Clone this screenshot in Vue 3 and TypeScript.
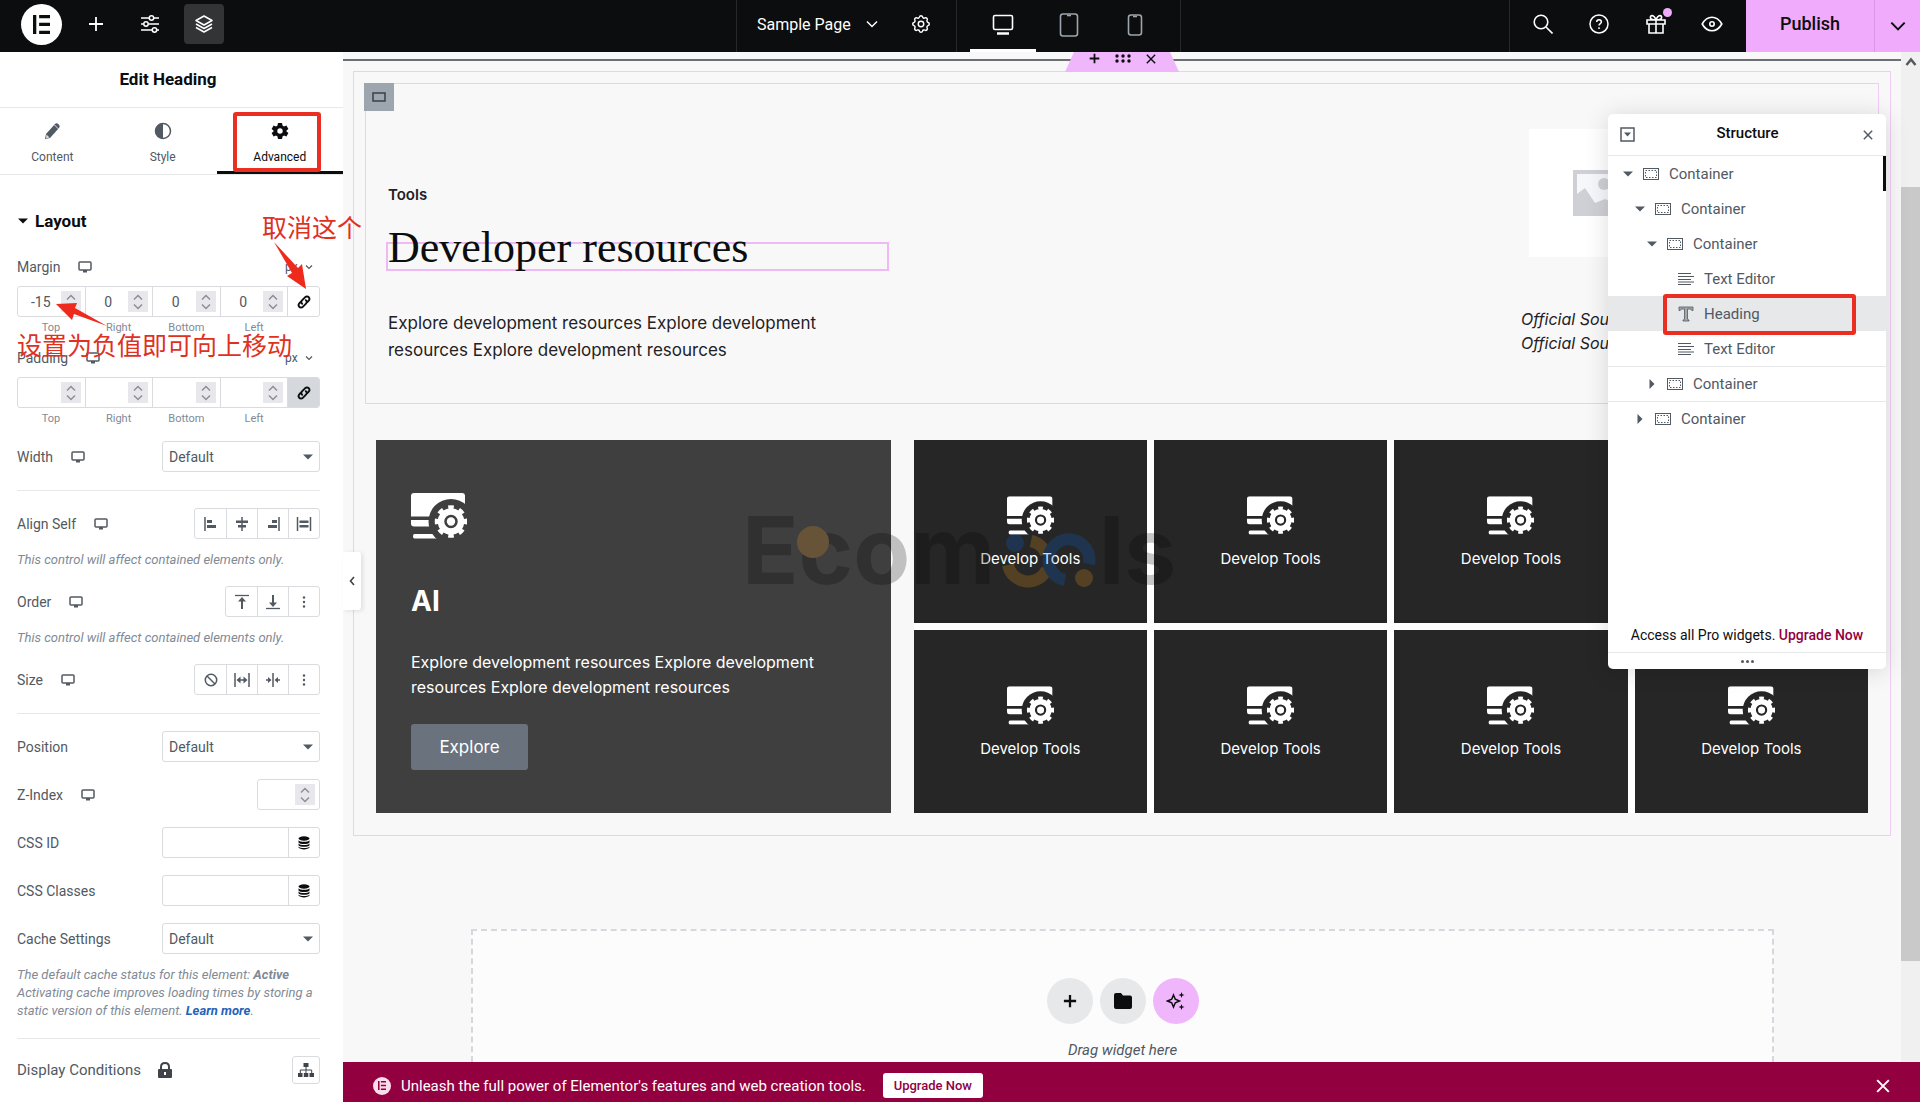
<script setup lang="ts">
import { ref } from 'vue'

interface TreeNode {
  label: string
  level: number
  kind: 'container' | 'text' | 'heading'
  open?: boolean
  ruled?: boolean
}

const sides = ['Top', 'Right', 'Bottom', 'Left']
const margin = ref<string[]>(['-15', '0', '0', '0'])
const padding = ref<string[]>(['', '', '', ''])
const zIndex = ref('')
const cssId = ref('')
const cssClasses = ref('')

const alignIcons = ['a-start', 'a-center', 'a-end', 'a-stretch']
const orderIcons = ['o-start', 'o-end', 'dots-v']
const sizeIcons = ['none', 'grow', 'shrink', 'dots-v']
const tiles = Array.from({ length: 8 }, (_, i) => ({ id: i, label: 'Develop Tools' }))

const tree: TreeNode[] = [
  { label: 'Container', level: 0, kind: 'container', open: true },
  { label: 'Container', level: 1, kind: 'container', open: true },
  { label: 'Container', level: 2, kind: 'container', open: true },
  { label: 'Text Editor', level: 3, kind: 'text' },
  { label: 'Heading', level: 3, kind: 'heading' },
  { label: 'Text Editor', level: 3, kind: 'text' },
  { label: 'Container', level: 2, kind: 'container', open: false, ruled: true },
  { label: 'Container', level: 1, kind: 'container', open: false, ruled: true },
]
</script>

<template>
  <div class="app">
    <svg class="defs" aria-hidden="true">
      <symbol id="monitor" viewBox="0 0 14 12"><path d="M2 1h10q1 0 1 1v6q0 1-1 1H2Q1 9 1 8V2q0-1 1-1z" fill="none" stroke="currentColor" stroke-width="1.5" /><path d="M5 9h4v2.500H5z" fill="currentColor" /></symbol>
      <symbol id="chev" viewBox="0 0 12 12"><path d="M1 3.500l5 5 5-5" fill="none" stroke="currentColor" stroke-width="1.500" /></symbol>
      <symbol id="chev-s" viewBox="0 0 8 8"><path d="M1 2.500l3 3 3-3" fill="none" stroke="currentColor" stroke-width="1.200" /></symbol>
      <symbol id="caret" viewBox="0 0 10 6"><path d="M0 .5h10L5 5.500z" fill="currentColor" /></symbol>
      <symbol id="spin" viewBox="0 0 12 16"><path d="M2 5.500L6 1.500l4 4M2 10.500l4 4 4-4" fill="none" stroke="#8d8f96" stroke-width="1.500" /></symbol>
      <symbol id="link" viewBox="0 0 14 14"><g fill="none" stroke="#0c0d0e" stroke-width="1.900" stroke-linecap="round"><path d="M5.200 8.800C4 7.600 4.200 6.200 5 5.400L8.200 2.200c1-1 2.600-1 3.500 0s.9 2.400 0 3.400L10.400 7" /><path d="M8.800 5.200C10 6.400 9.800 7.800 9 8.600l-3.200 3.200c-1 1-2.600 1-3.500 0s-.9-2.400 0-3.400L3.600 7" /></g></symbol>
      <symbol id="db" viewBox="0 0 12 14"><ellipse cx="6" cy="2.500" rx="5.500" ry="2.200" fill="#0c0d0e" /><path d="M.5 4.200c1.500 2 9.500 2 11 0v2.300c-1.500 2-9.500 2-11 0zM.5 7.500c1.500 2 9.500 2 11 0v1.800c-1.500 2-9.500 2-11 0zM.5 10.400c1.500 2 9.500 2 11 0v1.200c-1.500 2.400-9.500 2.400-11 0z" fill="#0c0d0e" /></symbol>
      <symbol id="a-start" viewBox="0 0 16 16"><path d="M2 1v14" stroke="currentColor" stroke-width="1.500" /><path d="M4 4h5v3H4zM4 9h9v3H4z" fill="currentColor" /></symbol>
      <symbol id="a-center" viewBox="0 0 16 16"><path d="M8 1v14" stroke="currentColor" stroke-width="1.500" /><path d="M2 4.500h12v2.500H2zM4 9h8v2.500H4z" fill="currentColor" /></symbol>
      <symbol id="a-end" viewBox="0 0 16 16"><path d="M14 1v14" stroke="currentColor" stroke-width="1.500" /><path d="M7 4h5v3H7zM3 9h9v3H3z" fill="currentColor" /></symbol>
      <symbol id="a-stretch" viewBox="0 0 16 16"><path d="M1.500 1v14M14.500 1v14" stroke="currentColor" stroke-width="1.500" /><path d="M3.500 4.500h9v2.500h-9zM3.500 9h9v2.500h-9z" fill="currentColor" /></symbol>
      <symbol id="o-start" viewBox="0 0 16 16"><path d="M1 1.500h14" stroke="currentColor" stroke-width="1.300" /><path d="M8 15V6" stroke="currentColor" stroke-width="2" /><path d="M4 7.500L8 3l4 4.500z" fill="currentColor" /></symbol>
      <symbol id="o-end" viewBox="0 0 16 16"><path d="M1 14.500h14" stroke="currentColor" stroke-width="1.300" /><path d="M8 1v9" stroke="currentColor" stroke-width="2" /><path d="M4 8.500L8 13l4-4.500z" fill="currentColor" /></symbol>
      <symbol id="dots-v" viewBox="0 0 16 16"><circle cx="8" cy="3.500" r="1.200" fill="currentColor" /><circle cx="8" cy="8" r="1.200" fill="currentColor" /><circle cx="8" cy="12.500" r="1.200" fill="currentColor" /></symbol>
      <symbol id="none" viewBox="0 0 16 16"><circle cx="8" cy="8" r="5.700" fill="none" stroke="currentColor" stroke-width="1.500" /><path d="M4 4l8 8" stroke="currentColor" stroke-width="1.500" /></symbol>
      <symbol id="grow" viewBox="0 0 16 16"><path d="M1 1v14M15 1v14M5 8h6" stroke="currentColor" stroke-width="1.500" /><path d="M2.500 8l4-3.500v7zM13.500 8l-4-3.500v7z" fill="currentColor" /></symbol>
      <symbol id="shrink" viewBox="0 0 16 16"><path d="M8 1v14M1 8h4M11 8h4" stroke="currentColor" stroke-width="1.500" /><path d="M6.500 8L3 5v6zM9.500 8L13 5v6z" fill="currentColor" /></symbol>
      <symbol id="container" viewBox="0 0 16 12"><rect x=".5" y=".5" width="15" height="11" fill="none" stroke="currentColor" /><rect x="2.500" y="2.500" width="11" height="7" fill="none" stroke="currentColor" stroke-dasharray="1.500 1.500" /></symbol>
      <symbol id="text" viewBox="0 0 16 12"><path d="M0 .5h13M0 3.500h16M0 6.500h13M0 9h16M0 11.500h13" stroke="currentColor" /></symbol>
      <symbol id="heading" viewBox="0 0 16 16"><path d="M1 1h14v3.500h-1.200Q13.500 3 12 3H9.500v10q0 1 1.500 1v1H5v-1q1.500 0 1.500-1V3H4Q2.500 3 2.200 4.500H1z" fill="#a4a9ae" stroke="currentColor" stroke-width=".8" /></symbol>
      <symbol id="dev" viewBox="0 0 56 46">
        <mask id="devcut"><path d="M0 0h56v46H0z" fill="#fff" /><circle cx="40" cy="28.500" r="22.500" fill="#000" /></mask>
        <g mask="url(#devcut)" fill="#fff"><path d="M3 0h48q3 0 3 3v20.500H0V3q0-3 3-3z" /><path d="M0 27h40v6.500H3q-3 0-3-3z" /><path d="M3.500 41H30v4.500H3.500q-1.500 0-1.500-2.200T3.500 41z" /></g>
        <circle cx="40" cy="28.500" r="10" fill="none" stroke="#fff" stroke-width="6.500" />
        <circle cx="40" cy="28.500" r="14" fill="none" stroke="#fff" stroke-width="4.500" pathLength="16" stroke-dasharray="1 1" stroke-dashoffset=".5" />
        <circle cx="40" cy="28.500" r="4.200" fill="#fff" />
      </symbol>
      <symbol id="e" viewBox="0 0 18 20"><path d="M0 0h3.500v20H0zM6.500 0H18v3.500H6.500zM6.500 8.200H18v3.500H6.500zM6.500 16.500H18V20H6.500z" fill="currentColor" /></symbol>
      <symbol id="plus" viewBox="0 0 16 16"><path d="M8 1v14M1 8h14" stroke="currentColor" stroke-width="1.800" /></symbol>
      <symbol id="plus-b" viewBox="0 0 16 16"><path d="M8 1v14M1 8h14" stroke="currentColor" stroke-width="2.600" /></symbol>
      <symbol id="x" viewBox="0 0 12 12"><path d="M1 1l10 10M11 1L1 11" stroke="currentColor" stroke-width="1.700" /></symbol>
    </svg>

    <header class="topbar">
      <div class="tools">
        <button class="logo" aria-label="Elementor"><svg width="17" height="19"><use href="#e" /></svg></button>
        <button class="tool" aria-label="Add"><svg width="16" height="16"><use href="#plus" /></svg></button>
        <button class="tool" aria-label="Site settings">
          <svg width="18" height="18" viewBox="0 0 18 18" fill="none" stroke="currentColor" stroke-width="1.500"><path d="M0 3h8M13 3h5M0 9h2.500M7.500 9H18M0 15h11M16 15h2" /><circle cx="10.500" cy="3" r="2.200" /><circle cx="5" cy="9" r="2.200" /><circle cx="13.500" cy="15" r="2.200" /></svg>
        </button>
        <button class="tool on" aria-label="Structure">
          <svg width="18" height="18" viewBox="0 0 18 18" fill="none" stroke="currentColor" stroke-width="1.500" stroke-linejoin="round"><path d="M9 1l8 4.500L9 10 1 5.500zM1 9l8 4.500L17 9M1 12.500L9 17l8-4.500" /></svg>
        </button>
      </div>
      <div class="page">
        <button class="page-name">Sample Page <svg width="12" height="12"><use href="#chev" /></svg></button>
        <button class="page-gear" aria-label="Page settings">
          <svg width="22" height="22" viewBox="0 0 24 24" fill="none" stroke="currentColor" stroke-width="1.600" stroke-linejoin="round"><path d="M10.300 4.300c.4-1.800 3-1.800 3.400 0a1.700 1.700 0 0 0 2.600 1.100c1.500-.9 3.300.8 2.400 2.400a1.700 1.700 0 0 0 1 2.500c1.800.5 1.800 3 0 3.500a1.700 1.700 0 0 0-1 2.500c.9 1.500-.9 3.300-2.400 2.400a1.700 1.700 0 0 0-2.600 1c-.4 1.800-3 1.800-3.400 0a1.700 1.700 0 0 0-2.600-1c-1.500.9-3.300-.9-2.400-2.400a1.700 1.700 0 0 0-1-2.500c-1.800-.5-1.800-3 0-3.500a1.700 1.700 0 0 0 1-2.500c-.9-1.500.9-3.300 2.400-2.400 1 .6 2.300.1 2.600-1.100z" /><circle cx="12" cy="12" r="3" /></svg>
        </button>
      </div>
      <div class="devices">
        <button class="device current" aria-label="Desktop"><svg width="22" height="22" viewBox="0 0 22 22" fill="none" stroke="currentColor" stroke-width="1.600"><rect x="1.500" y="1.500" width="19" height="14" rx="1.500" /><path d="M5 19.500h12" stroke-width="2.500" /></svg></button>
        <button class="device" aria-label="Tablet"><svg width="20" height="24" viewBox="0 0 20 24" fill="none" stroke="currentColor" stroke-width="1.600"><rect x="1.500" y="1" width="17" height="22" rx="2.500" /><path d="M8 2.500h4" /></svg></button>
        <button class="device" aria-label="Mobile"><svg width="16" height="22" viewBox="0 0 16 22" fill="none" stroke="currentColor" stroke-width="1.600"><rect x="1.500" y="1" width="13" height="20" rx="2.500" /><path d="M6 2.500h4" /></svg></button>
      </div>
      <div class="actions">
        <button aria-label="Search"><svg width="20" height="20" viewBox="0 0 20 20" fill="none" stroke="currentColor" stroke-width="1.600"><circle cx="8" cy="8" r="6.800" /><path d="M13 13l6.500 6.500" /></svg></button>
        <button aria-label="Help"><svg width="20" height="20" viewBox="0 0 20 20" fill="none" stroke="currentColor" stroke-width="1.500"><circle cx="10" cy="10" r="9" /><path d="M7.700 8c0-3 4.700-3 4.700 0 0 1.600-2.400 1.700-2.400 3.600M10 13.200v1.800" /></svg></button>
        <button aria-label="What's new"><svg width="20" height="20" viewBox="0 0 20 20" fill="none" stroke="currentColor" stroke-width="1.600"><path d="M1 6h18v4H1zM3 10v9h14v-9M10 6v13M10 6C8 0 3.500 1 4.500 4q.5 2 5.500 2c2-6 6.500-5 5.500-2q-.5 2-5.500 2" /></svg><i class="dot" /></button>
        <button aria-label="Preview"><svg width="22" height="20" viewBox="0 0 22 20" fill="none" stroke="currentColor" stroke-width="1.600"><path d="M1.200 10Q5 3.200 11 3.200T20.800 10Q17 16.800 11 16.800T1.200 10z" /><circle cx="11" cy="10" r="2.200" /></svg></button>
      </div>
      <div class="publish">
        <button class="pub">Publish</button>
        <button class="more" aria-label="Save options"><svg width="16" height="16"><use href="#chev" /></svg></button>
      </div>
    </header>

    <main class="work">
      <aside class="panel">
        <h1 class="panel-title">Edit Heading</h1>
        <nav class="tabs">
          <button class="tab t1">
            <svg width="16" height="18" viewBox="0 0 16 18"><path d="M1 17l1-5 9-10q1.500-1.500 3.500.3T15 6L6 16z" fill="#515962" /><path d="M2.500 12.500l3 3-3.500.8z" fill="#dfe1e3" /><path d="M10.500 3l4 4" stroke="#fff" stroke-width=".8" /></svg>
            Content
          </button>
          <button class="tab t2">
            <svg width="18" height="18" viewBox="0 0 18 18"><circle cx="9" cy="9" r="7.500" fill="none" stroke="#515962" stroke-width="1.500" /><path d="M9 1.500v15a7.500 7.500 0 0 1 0-15z" fill="#515962" /></svg>
            Style
          </button>
          <button class="tab t3 active">
            <svg width="18" height="18" viewBox="0 0 18 18"><path fill-rule="evenodd" d="M7 1h4l.5 2.500 1.500.9 2.400-.9 2 3.500-1.900 1.600v1L17.400 11l-2 3.500-2.400-.9-1.500.9L11 17H7l-.5-2.500-1.500-.9-2.400.9-2-3.500 1.900-1.400v-1L.6 7l2-3.500 2.400.9 1.500-.9zM9 6.300a2.700 2.700 0 1 0 0 5.400 2.700 2.700 0 0 0 0-5.400z" fill="#0c0d0e" /></svg>
            Advanced
          </button>
        </nav>

        <div class="controls">
          <button class="section"><svg width="10" height="6"><use href="#caret" /></svg>Layout</button>

          <fieldset class="dims first">
            <div class="dims-head">
              <span class="name">Margin</span><svg class="mon" width="14" height="12"><use href="#monitor" /></svg>
              <label class="unit"><select aria-label="Margin unit"><option>px</option></select><svg width="8" height="8"><use href="#chev-s" /></svg></label>
            </div>
            <div class="dims-box">
              <span v-for="(s, i) in sides" :key="s" class="num"><input :id="'m' + s" v-model="margin[i]" type="number" /><button tabindex="-1" :aria-label="'Step ' + s"><svg width="12" height="16"><use href="#spin" /></svg></button></span>
              <button class="linked" aria-label="Link values"><svg width="14" height="14"><use href="#link" /></svg></button>
            </div>
            <div class="dims-names"><label v-for="s in sides" :key="s" :for="'m' + s">{{ s }}</label></div>
          </fieldset>

          <fieldset class="dims">
            <div class="dims-head">
              <span class="name">Padding</span><svg class="mon" width="14" height="12"><use href="#monitor" /></svg>
              <label class="unit"><select aria-label="Padding unit"><option>px</option></select><svg width="8" height="8"><use href="#chev-s" /></svg></label>
            </div>
            <div class="dims-box">
              <span v-for="(s, i) in sides" :key="s" class="num"><input :id="'p' + s" v-model="padding[i]" type="number" /><button tabindex="-1" :aria-label="'Step ' + s"><svg width="12" height="16"><use href="#spin" /></svg></button></span>
              <button class="linked pressed" aria-label="Link values"><svg width="14" height="14"><use href="#link" /></svg></button>
            </div>
            <div class="dims-names"><label v-for="s in sides" :key="s" :for="'p' + s">{{ s }}</label></div>
          </fieldset>

          <div class="row">
            <label class="name" for="width">Width</label><svg class="mon" width="14" height="12"><use href="#monitor" /></svg>
            <span class="select"><select id="width"><option>Default</option></select><svg width="10" height="6"><use href="#caret" /></svg></span>
          </div>
          <hr />
          <div class="row">
            <span class="name">Align Self</span><svg class="mon" width="14" height="12"><use href="#monitor" /></svg>
            <div class="choices"><button v-for="n in alignIcons" :key="n" :aria-label="n"><svg width="16" height="16"><use :href="'#' + n" /></svg></button></div>
          </div>
          <p class="hint">This control will affect contained elements only.</p>
          <div class="row">
            <span class="name">Order</span><svg class="mon" width="14" height="12"><use href="#monitor" /></svg>
            <div class="choices"><button v-for="n in orderIcons" :key="n" :aria-label="n"><svg width="16" height="16"><use :href="'#' + n" /></svg></button></div>
          </div>
          <p class="hint">This control will affect contained elements only.</p>
          <div class="row">
            <span class="name">Size</span><svg class="mon" width="14" height="12"><use href="#monitor" /></svg>
            <div class="choices"><button v-for="n in sizeIcons" :key="n" :aria-label="n"><svg width="16" height="16"><use :href="'#' + n" /></svg></button></div>
          </div>
          <hr />
          <div class="row">
            <label class="name" for="position">Position</label>
            <span class="select"><select id="position"><option>Default</option></select><svg width="10" height="6"><use href="#caret" /></svg></span>
          </div>
          <div class="row">
            <label class="name" for="z">Z-Index</label><svg class="mon" width="14" height="12"><use href="#monitor" /></svg>
            <span class="num single"><input id="z" v-model="zIndex" type="number" /><button tabindex="-1" aria-label="Step Z-Index"><svg width="12" height="16"><use href="#spin" /></svg></button></span>
          </div>
          <div class="row">
            <label class="name" for="cssid">CSS ID</label>
            <span class="dyn"><input id="cssid" v-model="cssId" type="text" /><button aria-label="Dynamic tags"><svg width="12" height="14"><use href="#db" /></svg></button></span>
          </div>
          <div class="row">
            <label class="name" for="cssclass">CSS Classes</label>
            <span class="dyn"><input id="cssclass" v-model="cssClasses" type="text" /><button aria-label="Dynamic tags"><svg width="12" height="14"><use href="#db" /></svg></button></span>
          </div>
          <div class="row">
            <label class="name" for="cache">Cache Settings</label>
            <span class="select"><select id="cache"><option>Default</option></select><svg width="10" height="6"><use href="#caret" /></svg></span>
          </div>
          <p class="hint">The default cache status for this element: <b>Active</b><br />Activating cache improves loading times by storing a static version of this element. <a href="#">Learn more</a>.</p>
          <hr />
          <div class="row conditions">
            <span class="name">Display Conditions</span>
            <svg class="lock" width="14" height="16" viewBox="0 0 14 16"><path d="M3 8V5q0-4 4-4t4 4v3" fill="none" stroke="#3f444b" stroke-width="2" /><path d="M1 7h12q1 0 1 1v7q0 1-1 1H1q-1 0-1-1V8q0-1 1-1z" fill="#3f444b" /><path d="M6 10h2v3H6z" fill="#fff" /></svg>
            <button class="cond" aria-label="Edit conditions"><svg width="16" height="14" viewBox="0 0 16 14" fill="#3f444b"><path d="M5.500 0h5v4h-5zM0 10h4.500v4H0zM5.800 10h4.500v4H5.800zM11.500 10H16v4h-4.500z" /><path d="M8 4v6M2.300 10V7h11.400v3" fill="none" stroke="#3f444b" /></svg></button>
          </div>
        </div>

        <div class="mark tab-mark" />
        <div class="note note-a">取消这个</div>
        <div class="note note-b">设置为负值即可向上移动</div>
        <svg class="arrow arrow-a" width="36" height="48" viewBox="0 0 36 48"><path d="M1 0L25 26l4-4 4 25-19-13 5-3z" fill="#ee2a1c" /></svg>
        <svg class="arrow arrow-b" width="52" height="26" viewBox="0 0 52 26"><path d="M51 24L18 12l-2 6L0 2 21 1l-2 5z" fill="#ee2a1c" /></svg>
        <button class="collapse" aria-label="Hide panel"><svg width="6" height="10" viewBox="0 0 6 10"><path d="M5 1L1.500 5 5 9" fill="none" stroke="#3f444b" stroke-width="1.600" /></svg></button>
      </aside>

      <section class="stage">
        <div class="view">
          <div class="canvas">
            <div class="outer">
              <div class="handle">
                <svg width="11" height="11"><use href="#plus-b" /></svg>
                <svg width="16" height="9" viewBox="0 0 16 9" fill="#0c0d0e"><circle cx="2" cy="2" r="1.700" /><circle cx="8" cy="2" r="1.700" /><circle cx="14" cy="2" r="1.700" /><circle cx="2" cy="7" r="1.700" /><circle cx="8" cy="7" r="1.700" /><circle cx="14" cy="7" r="1.700" /></svg>
                <svg width="10" height="10"><use href="#x" /></svg>
              </div>
              <div class="intro">
                <span class="badge"><svg width="14" height="10" viewBox="0 0 14 10"><rect x="1" y="1" width="12" height="8" fill="none" stroke="#3a3f45" stroke-width="1.500" /></svg></span>
                <div class="copy">
                  <p class="eyebrow">Tools</p>
                  <h2>Developer resources</h2>
                  <p class="lead">Explore development resources Explore development resources Explore development resources</p>
                </div>
                <div class="source">
                  <div class="thumb"><svg width="60" height="46" viewBox="0 0 60 46"><path d="M0 0h60v46H0z" fill="#ced0d6" /><path d="M4 4h52v27l-8-8-9 9-7-3-10 4L12 18l-8 6z" fill="#f6f7fa" /><circle cx="31" cy="14" r="6" fill="#ced0d6" /></svg></div>
                  <p>Official Source<br />Official Source</p>
                </div>
              </div>
              <div class="cards">
                <article class="feature">
                  <svg width="56" height="46"><use href="#dev" /></svg>
                  <h3>AI</h3>
                  <p>Explore development resources Explore development resources Explore development resources</p>
                  <button>Explore</button>
                </article>
                <div class="tiles">
                  <div v-for="t in tiles" :key="t.id" class="tile"><svg width="47" height="39"><use href="#dev" /></svg><span>{{ t.label }}</span></div>
                </div>
              </div>
            </div>
            <div class="drop">
              <div class="drop-buttons">
                <button aria-label="Add container"><svg width="14" height="14"><use href="#plus-b" /></svg></button>
                <button aria-label="Templates"><svg width="18" height="16" viewBox="0 0 18 16"><path d="M2 0h5l2 2.500h7q2 0 2 2V14q0 2-2 2H2q-2 0-2-2V2q0-2 2-2z" fill="#0c0d0e" /></svg></button>
                <button class="ai" aria-label="Build with AI"><svg width="20" height="20" viewBox="0 0 20 20"><path d="M7.500 4l1.800 4.200L13.500 10l-4.200 1.800L7.500 16l-1.800-4.200L1.500 10l4.200-1.800z" fill="none" stroke="#0c0d0e" stroke-width="1.500" /><path d="M15.500 1l.8 2.200 2.200.8-2.200.8-.8 2.200-.8-2.200-2.200-.8 2.200-.8zM15.500 13l.8 2.200 2.200.8-2.200.8-.8 2.200-.8-2.200-2.200-.8 2.200-.8z" fill="#0c0d0e" /></svg></button>
              </div>
              <p>Drag widget here</p>
            </div>
          </div>
          <div class="scroll"><svg width="12" height="12" viewBox="0 0 12 12"><path d="M1.500 9L6 3.500 10.500 9" fill="none" stroke="#555a60" stroke-width="2.500" /></svg><div class="thumb-bar" /></div>
        </div>
        <footer class="notice">
          <span class="mini"><svg width="8" height="9"><use href="#e" /></svg></span>
          <span>Unleash the full power of Elementor's features and web creation tools.</span>
          <button class="upgrade">Upgrade Now</button>
          <button class="dismiss" aria-label="Dismiss"><svg width="14" height="14"><use href="#x" /></svg></button>
        </footer>
      </section>
    </main>

    <svg class="brand" width="430" height="92" viewBox="0 0 430 92">
      <g opacity=".22">
        <text x="-3" y="79" font-size="93">Ecom</text>
        <text x="354" y="79" font-size="93">ls</text>
        <circle cx="68" cy="37" r="16" fill="#f5a020" />
        <path d="M263 60a20.500 20.500 0 0 0 39 4M286 36a20 20 0 0 1 15 13" fill="none" stroke="#f5a020" stroke-width="12" />
        <circle cx="270" cy="38" r="9" fill="#0a68e0" />
        <path d="M320 75a20.500 20.500 0 1 1 24-16" fill="none" stroke="#0a68e0" stroke-width="12" />
        <circle cx="339" cy="73" r="9" fill="#f5a020" />
      </g>
    </svg>

    <aside class="structure">
      <header>
        <button aria-label="Expand all"><svg width="15" height="15" viewBox="0 0 15 15"><rect x="1" y="1" width="13" height="13" fill="none" stroke="#515962" stroke-width="1.500" /><path d="M4 5.500h7L7.500 9.500z" fill="#515962" /></svg></button>
        <h2>Structure</h2>
        <button aria-label="Close"><svg width="10" height="10"><use href="#x" /></svg></button>
      </header>
      <ul>
        <li v-for="(n, i) in tree" :key="i" :class="['l' + n.level, { selected: n.kind === 'heading', ruled: n.ruled }]">
          <span class="tw"><svg v-if="n.kind === 'container'" width="10" height="6" :class="{ shut: !n.open }"><use href="#caret" /></svg></span>
          <svg class="ic" width="16" :height="n.kind === 'heading' ? 16 : 12"><use :href="'#' + n.kind" /></svg>
          <span>{{ n.label }}</span>
          <div v-if="n.kind === 'heading'" class="mark row-mark" />
        </li>
      </ul>
      <p class="pro">Access all Pro widgets. <a href="#">Upgrade Now</a></p>
      <div class="grip"><i /><i /><i /></div>
    </aside>
  </div>
</template>

<style>
body { background: #f8f8f8; }
</style>

<style scoped>
.app { position: relative; min-height: 100vh; display: flex; flex-direction: column; font-family: Roboto, "Noto Sans CJK SC", sans-serif; color: #515962; overflow: hidden; }
.app *, .app *::before { box-sizing: border-box; }
.defs { position: absolute; width: 0; height: 0; }
button { font: inherit; color: inherit; background: none; border: 0; padding: 0; display: flex; align-items: center; justify-content: center; }
h1, h2, h3, p, ul, fieldset { margin: 0; padding: 0; border: 0; min-width: 0; }
svg { display: block; flex: none; }
a { text-decoration: none; }

.topbar { height: 52px; display: flex; background: #0c0d0e; color: #fff; }
.tools { flex: 736; display: flex; align-items: center; padding: 0 0 4px 21px; }
.logo { width: 41px; height: 41px; border-radius: 50%; background: #fff; color: #0c0d0e; margin-right: 14px; }
.tool { width: 40px; height: 40px; border-radius: 4px; margin-right: 14px; }
.tool.on { background: #333436; }
.page { width: 220px; display: flex; align-items: center; justify-content: space-between; padding: 0 24px 4px 20px; border-left: 1px solid #26282b; font-size: 16px; }
.page-name { gap: 15px; }
.devices { width: 225px; display: flex; border: solid #26282b; border-width: 0 1px; padding-left: 13px; margin-right: 328px; }
.device { width: 66px; padding-bottom: 3px; color: #9da5ae; }
.device.current { color: #fff; border-bottom: 3px solid #fff; padding-bottom: 0; }
.actions { width: 237px; display: flex; align-items: center; border-left: 1px solid #26282b; padding: 0 6px 4px 5px; }
.actions button { flex: 1; height: 40px; position: relative; }
.dot { position: absolute; right: 12px; top: 4px; width: 9px; height: 9px; border-radius: 50%; background: #f0abfc; }
.publish { display: flex; width: 174px; background: #f0abfc; color: #0c0d0e; font-size: 18px; font-weight: 500; }
.pub { flex: 1; padding-bottom: 6px; }
.more { width: 46px; border-left: 1px solid #dd97ea; }

.work { flex: 1; display: flex; }
.panel { position: relative; width: 343px; flex: none; background: #fff; z-index: 1; }
.panel-title { height: 55px; line-height: 55px; padding-right: 7px; text-align: center; font-size: 17px; font-weight: 700; color: #0c0d0e; }
.tabs { height: 68px; display: flex; border: solid #e6e8ea; border-width: 1px 0; }
.tab { flex-direction: column; gap: 9px; font-size: 12px; line-height: 16px; padding-top: 4px; }
.t1 { flex: 106; }
.t2 { flex: 109; padding-left: 4px; }
.t3 { flex: 128; }
.tab.active { color: #0c0d0e; border-bottom: 3px solid #0c0d0e; padding-top: 7px; }
.controls { padding: 35px 23px 12px 17px; font-size: 14px; }
.section { width: 100%; justify-content: flex-start; gap: 7px; height: 22px; padding-left: 1px; font-size: 17px; font-weight: 700; color: #0c0d0e; }
.dims { margin-top: 11px; }
.dims.first { margin-top: 24px; }
.dims-head { display: flex; align-items: center; height: 22px; }
.mon { margin-left: 18px; }
.unit { margin-left: auto; display: flex; align-items: center; gap: 4px; padding-right: 7px; }
.unit select { appearance: none; border: 0; background: none; padding: 0; width: 16px; font: 12px Roboto, sans-serif; color: #515962; }
.dims-box { display: flex; height: 31px; margin-top: 8px; border: 1px solid #d9dbde; border-radius: 3px; overflow: hidden; }
.num { flex: 1; display: flex; align-items: center; padding-right: 4px; border-right: 1px solid #d9dbde; min-width: 0; }
.num input { flex: 1; width: 0; min-width: 0; height: 100%; border: 0; padding: 0 0 0 3px; background: none; text-align: center; font: 14px Roboto, sans-serif; color: #515962; appearance: textfield; outline: 0; }
.num input::-webkit-inner-spin-button { appearance: none; display: none; }
.num button { width: 20px; height: 21px; background: #e7e7ec; flex: none; }
.linked { width: 31px; flex: none; }
.linked.pressed { background: #d5d8dc; }
.dims-names { display: flex; margin: 3px 32px 0 0; height: 16px; font-size: 11px; line-height: 16px; color: #818a96; }
.dims-names label { flex: 1; text-align: center; }
.row { display: flex; align-items: center; height: 31px; margin-top: 17px; }
.dims + .row { margin-top: 14px; }
hr { border: 0; height: 1px; background: #e6e8ea; margin: 18px 0 0; }
.hint { margin-top: 12px; font-size: 13px; line-height: 18px; font-style: italic; color: #818a96; }
.hint a { color: #2563b8; font-weight: 700; }
.conditions { margin-top: 15px; font-size: 15px; }
.select { position: relative; margin-left: auto; width: 158px; height: 31px; }
.select select { appearance: none; width: 100%; height: 100%; border: 1px solid #d9dbde; border-radius: 3px; background: #fff; padding: 0 6px; font: 14px Roboto, sans-serif; color: #515962; }
.select svg { position: absolute; right: 7px; top: 13px; pointer-events: none; }
.choices { margin-left: auto; display: flex; height: 31px; border: 1px solid #d9dbde; border-radius: 3px; }
.choices button { width: 31px; }
.choices button + button { border-left: 1px solid #d9dbde; }
.single { flex: none; margin-left: auto; width: 63px; height: 31px; border: 1px solid #d9dbde; border-radius: 3px; }
.dyn { margin-left: auto; display: flex; width: 158px; height: 31px; border: 1px solid #d9dbde; border-radius: 3px; }
.dyn input { flex: 1; min-width: 0; border: 0; background: none; padding: 0 6px; outline: 0; }
.dyn button { width: 31px; border-left: 1px solid #d9dbde; }
.lock { margin-left: 17px; }
.cond { margin-left: auto; width: 28px; height: 28px; border: 1px solid #d9dbde; border-radius: 3px; }
.collapse { position: absolute; left: 343px; top: 500px; width: 18px; height: 58px; background: #fff; border-radius: 0 3px 3px 0; box-shadow: 2px 1px 4px rgba(0, 0, 0, .1); }
.mark { position: absolute; border: 4px solid #ea2e22; border-radius: 3px; }
.tab-mark { left: 233px; top: 60px; width: 88px; height: 60px; }
.note { position: absolute; font-family: "Noto Sans CJK SC", sans-serif; font-size: 25px; line-height: 36px; color: #e0301e; white-space: nowrap; }
.note-a { left: 262px; top: 156px; }
.note-b { left: 17px; top: 274px; }
.arrow { position: absolute; }
.arrow-a { left: 273px; top: 190px; }
.arrow-b { left: 56px; top: 250px; }

.stage { flex: 1; min-width: 0; display: flex; flex-direction: column; }
.view { flex: 1; display: flex; }
.canvas { flex: 1; min-width: 0; display: flex; flex-direction: column; background: #f8f8f8; padding: 19px 10px 0; position: relative; }
.canvas::before { content: ""; position: absolute; left: 0; right: 0; top: 7px; height: 2px; background: #6d6f73; }
.outer { position: relative; border: 1px solid #efcdf4; padding: 11px; font-family: Inter, sans-serif; }
.handle { position: absolute; left: 50%; top: -20px; margin-left: -57px; width: 114px; height: 20px; padding-bottom: 7px; background: #f0b6fb; clip-path: polygon(9px 0, 105px 0, 100% 100%, 0 100%); display: flex; align-items: center; justify-content: center; gap: 15px; color: #0c0d0e; }
.intro { position: relative; display: flex; justify-content: space-between; border: 1px solid #efcdf4; height: 321px; padding: 0 22px; }
.badge { position: absolute; left: -2px; top: -1px; width: 30px; height: 28px; background: #9da5ae; display: flex; align-items: center; justify-content: center; }
.copy { width: 500px; padding-top: 99px; color: #1f2124; }
.eyebrow { font-size: 15px; line-height: 24px; font-weight: 600; }
.copy h2 { margin: 35px 0 0 -2px; width: 503px; height: 29px; border: 2px solid #efb9f6; font-family: "Liberation Serif", serif; font-size: 44px; font-weight: 400; line-height: 8px; color: #0c0d0e; }
.lead { margin-top: 39px; font-size: 17px; line-height: 27px; }
.source { width: 313px; padding-top: 45px; }
.thumb { width: 214px; height: 128px; margin-left: -14px; background: #fff; display: flex; align-items: center; padding-left: 44px; }
.source p { margin: 50px 0 0 -22px; font-size: 16px; line-height: 24px; font-style: italic; color: #1f2124; }
.cards { display: grid; grid-template-columns: 515fr 955fr; gap: 23px; padding: 36px 11px 11px; }
.feature { min-width: 0; background: #3f3f3f; color: #fff; padding: 53px 35px 43px; }
.feature h3 { margin-top: 45px; font-size: 28px; line-height: 34px; font-weight: 700; }
.feature p { margin-top: 32px; font-size: 16px; line-height: 25px; }
.feature button { margin-top: 24px; width: 117px; height: 46px; border-radius: 3px; background: #69727d; font-size: 17px; }
.tiles { display: grid; grid-template-columns: repeat(4, 1fr); gap: 7px; background: #fff; }
.tile { background: #262626; color: #fff; display: flex; flex-direction: column; align-items: center; justify-content: center; gap: 12px; padding-top: 4px; font-size: 15px; line-height: 24px; }
.drop { flex: 1; margin: 93px 117px 0 118px; border: 2px dashed #d5d8dc; border-bottom: 0; background: #fcfcfc; padding: 47px 0 0; min-height: 132px; }
.drop-buttons { display: flex; justify-content: center; gap: 7px; }
.drop-buttons button { width: 46px; height: 46px; border-radius: 50%; background: #e6e8ea; color: #0c0d0e; }
.drop-buttons .ai { background: #f0b6fb; }
.drop p { margin-top: 17px; text-align: center; font-size: 15px; line-height: 18px; font-style: italic; }
.scroll { width: 19px; background: #f0f0f0; display: flex; flex-direction: column; align-items: center; padding-top: 4px; }
.thumb-bar { width: 19px; flex: 1; margin: 119px 0 101px; background: #c9c9c9; }
.notice { height: 40px; display: flex; align-items: center; background: #93003f; color: #fff; font-size: 15px; padding: 7px 30px 0 30px; }
.mini { width: 18px; height: 18px; border-radius: 50%; background: #fbdcec; color: #93003f; display: flex; align-items: center; justify-content: center; margin-right: 10px; }
.upgrade { margin-left: 17px; width: 100px; height: 25px; border-radius: 3px; background: #fff; color: #93003f; font-size: 13px; font-weight: 500; }
.dismiss { margin-left: auto; }

.brand { position: absolute; left: 50%; top: 505px; margin-left: -215px; font-family: Inter, sans-serif; font-weight: 700; pointer-events: none; z-index: 2; }

.structure { position: absolute; right: 34px; top: 114px; width: 278px; height: 555px; background: #fff; border-radius: 5px; box-shadow: 0 2px 24px rgba(0, 0, 0, .14); display: flex; flex-direction: column; font-size: 15px; z-index: 3; }
.structure header { display: flex; align-items: center; height: 42px; padding: 0 13px 0 12px; border-bottom: 1px solid #e6e8ea; }
.structure h2 { flex: 1; text-align: center; font-size: 15px; font-weight: 500; padding: 0 3px 3px 0; color: #0c0d0e; }
.structure ul { flex: 1; list-style: none; position: relative; }
.structure ul::before { content: ""; position: absolute; right: 0; top: 0; width: 3px; height: 35px; background: #0c0d0e; }
.structure li { position: relative; display: flex; align-items: center; height: 35px; }
.structure li.ruled { border-top: 1px solid #e6e8ea; }
.structure li.selected { background: #e6e8ea; }
.l0 { padding-left: 15px; }
.l1 { padding-left: 27px; }
.l2 { padding-left: 39px; }
.l3 { padding-left: 50px; }
.tw { width: 10px; margin-right: 10px; }
.shut { transform: rotate(-90deg); }
.ic { margin-right: 10px; }
.row-mark { left: 55px; right: 30px; top: -2px; bottom: -4px; }
.pro { text-align: center; font-size: 14px; line-height: 20px; color: #0c0d0e; margin-bottom: 7px; white-space: nowrap; }
.pro a { color: #93003f; font-weight: 500; }
.grip { height: 17px; border-top: 1px solid #e6e8ea; display: flex; align-items: center; justify-content: center; gap: 2px; }
.grip i { width: 3px; height: 3px; border-radius: 50%; background: #515962; }
</style>
